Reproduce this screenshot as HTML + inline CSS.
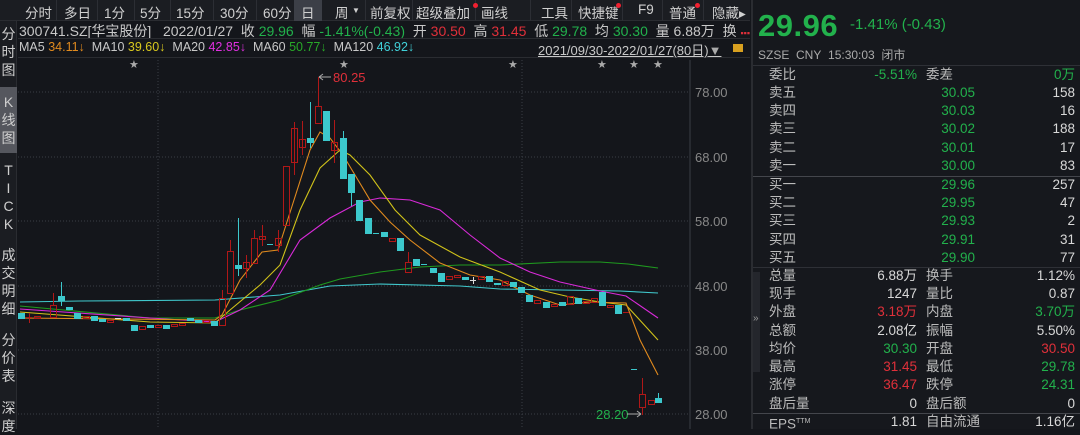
<!DOCTYPE html>
<html><head><meta charset="utf-8">
<style>
*{margin:0;padding:0;box-sizing:border-box}
body{width:1080px;height:429px;background:#14161b;font-family:"Liberation Sans","Noto Sans CJK SC",sans-serif;color:#c8c8c8;position:relative;overflow:hidden;font-size:13px}
.abs{position:absolute;white-space:nowrap}
.tb{position:absolute;top:0;left:0;width:750px;height:21px;background:#1b1d22;border-bottom:1px solid #2a2c31}
.tb span{position:absolute;top:2px;font-size:13.5px;color:#d0d0d0}
.tb i{position:absolute;top:0;width:1px;height:21px;background:#2c2e34}
.g{color:#22b14c}.r{color:#e0303a}
.side{position:absolute;left:0;top:21px;width:17px;height:408px;background:#1b1d22;border-right:1px solid #2a2c31}
.side div{position:absolute;left:0;width:17px;text-align:center;font-size:14px;line-height:18px;color:#cfcfcf}
.rp{position:absolute;left:751px;top:0;width:329px;height:429px;background:#16181d;border-left:2px solid #2a2c31}
.row{position:absolute;left:16px;width:306px;height:18px;font-size:13.5px;line-height:18px}
.row .l1{position:absolute;left:0;color:#bbb}
.row .v1{position:absolute;right:158px;text-align:right}
.row .l2{position:absolute;left:157px;color:#bbb}
.row .v2{position:absolute;right:0;text-align:right}
.w{color:#d8d8d8}
</style></head><body>
<div class="tb">
<i style="left:56px"></i><i style="left:97px"></i><i style="left:134px"></i><i style="left:170px"></i><i style="left:213px"></i><i style="left:256px"></i><i style="left:365px"></i><i style="left:412px"></i><i style="left:475px"></i><i style="left:530px"></i><i style="left:571px"></i><i style="left:622px"></i><i style="left:662px"></i><i style="left:703px"></i>
<span style="left:25px">分时</span><span style="left:64px">多日</span><span style="left:104px">1分</span><span style="left:140px">5分</span><span style="left:176px">15分</span><span style="left:220px">30分</span><span style="left:263px">60分</span>
<div class="abs" style="left:294px;top:0;width:28px;height:21px;background:#3c3f47"></div><span style="left:301px">日</span><span style="left:335px">周</span><span style="left:352px;font-size:8px;top:6px">▼</span>
<span style="left:370px">前复权</span><span style="left:416px">超级叠加</span><span style="left:481px">画线</span><span style="left:541px">工具</span><span style="left:578px">快捷键</span><span style="left:638px">F9</span><span style="left:669px">普通</span><span style="left:712px">隐藏▸</span>
<div class="abs" style="left:473px;top:3px;width:5px;height:5px;border-radius:3px;background:#f02030"></div>
<div class="abs" style="left:616px;top:3px;width:5px;height:5px;border-radius:3px;background:#f02030"></div>
<div class="abs" style="left:695px;top:3px;width:5px;height:5px;border-radius:3px;background:#f02030"></div>
</div>
<div class="abs" style="left:19px;top:21px;font-size:14px">300741.SZ[华宝股份]&nbsp;&nbsp;&nbsp;2022/01/27&nbsp;&nbsp;收 <span class="g">29.96</span>&nbsp;&nbsp;幅 <span class="g">-1.41%(-0.43)</span>&nbsp;&nbsp;开 <span class="r">30.50</span>&nbsp;&nbsp;高 <span class="r">31.45</span>&nbsp;&nbsp;低 <span class="g">29.78</span>&nbsp;&nbsp;均 <span class="g">30.30</span>&nbsp;&nbsp;量 6.88万&nbsp;&nbsp;换 <span class="r" style="font-size:9px">▪▪▪</span></div>
<div class="abs" style="left:18px;top:38px;width:732px;height:20px;border-bottom:1px solid #2a2c31;border-top:1px solid #2a2c31"></div>
<div class="abs" style="left:19px;top:40px;font-size:12.5px">MA5 <span style="color:#e08a1e">34.11↓</span>&nbsp;&nbsp;MA10 <span style="color:#d8c81e">39.60↓</span>&nbsp;&nbsp;MA20 <span style="color:#e030e0">42.85↓</span>&nbsp;&nbsp;MA60 <span style="color:#28a828">50.77↓</span>&nbsp;&nbsp;MA120 <span style="color:#40d0d8">46.92↓</span></div>
<div class="abs" style="left:538px;top:40px;font-size:13px;text-decoration:underline">2021/09/30-2022/01/27(80日)<span style="color:#aaa;text-decoration:none">▼</span></div>
<div class="abs" style="left:733px;top:44px;width:10px;height:8px;background:#d8a020"></div>
<div class="side">
<div style="top:4px">分<br>时<br>图</div>
<div style="top:66px;height:66px;background:#55575e;padding-top:6px">K<br>线<br>图</div>
<div style="top:140px">T<br>I<br>C<br>K</div>
<div style="top:225px">成<br>交<br>明<br>细</div>
<div style="top:310px">分<br>价<br>表</div>
<div style="top:378px">深<br>度</div>
</div>
<svg class="abs" style="left:0;top:0" width="750" height="429">
<g stroke="#3a3d44" stroke-dasharray="1,2" stroke-width="1">
<line x1="18" y1="92" x2="690" y2="92"/><line x1="18" y1="157" x2="690" y2="157"/><line x1="18" y1="221" x2="690" y2="221"/><line x1="18" y1="286" x2="690" y2="286"/><line x1="18" y1="350" x2="690" y2="350"/><line x1="18" y1="414" x2="690" y2="414"/>
<line x1="158" y1="60" x2="158" y2="429"/><line x1="522" y1="60" x2="522" y2="429"/>
</g>
<line x1="690" y1="60" x2="690" y2="429" stroke="#3a3d44"/>
<g fill="#aaa" font-size="11" font-family="Liberation Sans"><text x="129" y="68">★</text><text x="339" y="68">★</text><text x="508" y="68">★</text><text x="597" y="68">★</text><text x="629" y="68">★</text><text x="653" y="68">★</text></g>
<g fill="#888" font-size="13" font-family="Liberation Sans"><text x="695" y="97">78.00</text><text x="695" y="162">68.00</text><text x="695" y="226">58.00</text><text x="695" y="291">48.00</text><text x="695" y="355">38.00</text><text x="695" y="419">28.00</text></g>
<text x="333" y="82" fill="#e0303a" font-size="13" font-family="Liberation Sans">80.25</text>
<path d="M319 77h12M319 77l4-3M319 77l4 3" stroke="#aaa" fill="none"/>
<text x="596" y="419" fill="#22b14c" font-size="13" font-family="Liberation Sans">28.20</text>
<path d="M627 414h14M641 414l-4-3M641 414l-4 3" stroke="#aaa" fill="none"/>
<g fill="none" stroke-width="1.1">
<polyline stroke="#40c8cc" points="20,302 80,301 215,300 280,295 330,286 380,284 460,286 500,289 560,290 620,291 658,293"/>
<polyline stroke="#1f9a1f" points="20,306 150,318 215,318 240,310 280,300 320,285 340,279 380,272 420,267 460,265 500,265 560,262 600,262 628,264 658,268"/>
<polyline stroke="#d82ad8" points="20,309 150,318 215,322 240,310 270,290 300,240 330,218 360,202 380,198 410,200 440,210 470,235 500,258 530,272 560,282 600,291 626,296 658,318"/>
<polyline stroke="#d0c21a" points="20,312 150,322 215,323 230,310 260,285 280,265 300,210 320,168 340,150 350,155 370,175 395,210 420,235 460,257 500,272 540,290 570,297 600,302 626,305 658,340"/>
<polyline stroke="#e08a1e" points="20,318 215,320 222,315 240,280 262,252 278,250 294,200 310,150 320,132 330,138 343,155 355,175 370,200 390,222 410,240 440,263 470,275 500,280 530,295 560,305 590,302 626,303 640,340 658,375"/>
</g>
<g stroke-width="1">
<g stroke="#b01818" fill="none">
<rect x="50.5" y="305.5" width="6" height="12"/><line x1="53.5" y1="293" x2="53.5" y2="305"/>
<line x1="26" y1="317.5" x2="32" y2="317.5"/><line x1="29.5" y1="313" x2="29.5" y2="323"/>
<rect x="34.5" y="316.5" width="6" height="2"/><rect x="83.5" y="316.5" width="6" height="2"/><rect x="107.5" y="320.5" width="6" height="2"/>
<rect x="139.5" y="326.5" width="6" height="3"/><rect x="155.5" y="325.5" width="6" height="2"/><rect x="171.5" y="324.5" width="6" height="2"/><rect x="179.5" y="323.5" width="6" height="2"/><rect x="203.5" y="320.5" width="6" height="2"/>
<rect x="219.5" y="298.5" width="6" height="27"/><line x1="222.5" y1="290" x2="222.5" y2="298"/>
<rect x="227.5" y="251.5" width="6" height="42"/><line x1="230.5" y1="240" x2="230.5" y2="251"/>
<rect x="243.5" y="262.5" width="6" height="6"/><line x1="246.5" y1="255" x2="246.5" y2="278"/>
<rect x="251.5" y="238.5" width="6" height="25"/><line x1="254.5" y1="230" x2="254.5" y2="238"/>
<rect x="259.5" y="236.5" width="6" height="3"/><line x1="262.5" y1="225" x2="262.5" y2="246"/>
<rect x="275.5" y="238.5" width="6" height="7"/><line x1="278.5" y1="230" x2="278.5" y2="252"/>
<rect x="283.5" y="166.5" width="6" height="59"/>
<rect x="291.5" y="128.5" width="6" height="34"/><line x1="294.5" y1="122" x2="294.5" y2="175"/>
<rect x="299.5" y="139.5" width="6" height="8"/><line x1="302.5" y1="121" x2="302.5" y2="155"/>
<rect x="315.5" y="106.5" width="6" height="17"/><line x1="318.5" y1="77" x2="318.5" y2="106"/>
<rect x="331.5" y="142.5" width="6" height="8"/><line x1="334.5" y1="120" x2="334.5" y2="163"/>
<rect x="389.5" y="238.5" width="6" height="3"/>
<rect x="405.5" y="262.5" width="6" height="10"/><line x1="408.5" y1="252" x2="408.5" y2="262"/>
<rect x="446.5" y="276.5" width="6" height="3"/><rect x="454.5" y="275.5" width="6" height="2"/><rect x="478.5" y="276.5" width="6" height="3"/><rect x="502.5" y="281.5" width="6" height="4"/>
<rect x="534.5" y="300.5" width="6" height="3"/><rect x="551.5" y="304.5" width="6" height="2"/><rect x="567.5" y="296.5" width="6" height="8"/><rect x="583.5" y="301.5" width="6" height="2"/><rect x="591.5" y="298.5" width="6" height="4"/><rect x="607.5" y="305.5" width="6" height="2"/>
<line x1="623" y1="312.5" x2="629" y2="312.5"/>
<rect x="639.5" y="394.5" width="6" height="13"/><line x1="642.5" y1="378" x2="642.5" y2="394"/><line x1="642.5" y1="408" x2="642.5" y2="415"/>
<rect x="648.5" y="400.5" width="6" height="4"/>
</g>
<g fill="#3cc8cc" stroke="#3cc8cc">
<rect x="18.5" y="313.5" width="6" height="5"/><rect x="58.5" y="296.5" width="6" height="4"/><line x1="61.5" y1="282" x2="61.5" y2="306"/>
<rect x="66.5" y="307.5" width="6" height="2"/><rect x="74.5" y="313.5" width="6" height="5"/><rect x="91.5" y="316.5" width="6" height="4"/><rect x="99.5" y="319.5" width="6" height="2"/><rect x="123.5" y="318.5" width="6" height="2"/><rect x="131.5" y="325.5" width="6" height="5"/><rect x="147.5" y="325.5" width="6" height="2"/><rect x="163.5" y="325.5" width="6" height="3"/><rect x="187.5" y="318.5" width="6" height="2"/><rect x="195.5" y="320.5" width="6" height="2"/><rect x="211.5" y="321.5" width="6" height="4"/>
<rect x="235.5" y="265.5" width="6" height="3"/><line x1="238.5" y1="218" x2="238.5" y2="276" stroke-width="1"/>
<line x1="267" y1="244.5" x2="273" y2="244.5"/>
<rect x="307.5" y="138.5" width="6" height="4"/><line x1="310.5" y1="102" x2="310.5" y2="148"/>
<rect x="323.5" y="111.5" width="6" height="29"/>
<rect x="340.5" y="138.5" width="6" height="40"/><line x1="343.5" y1="131" x2="343.5" y2="138"/>
<rect x="348.5" y="174.5" width="6" height="18"/><line x1="351.5" y1="192" x2="351.5" y2="206"/>
<rect x="356.5" y="200.5" width="6" height="20"/>
<rect x="365.5" y="218.5" width="6" height="15"/>
<line x1="373" y1="233.5" x2="379" y2="233.5"/><rect x="381.5" y="232.5" width="6" height="4"/>
<rect x="397.5" y="238.5" width="6" height="12"/>
<rect x="413.5" y="259.5" width="6" height="6"/><line x1="421" y1="264.5" x2="427" y2="264.5"/>
<rect x="430.5" y="268.5" width="6" height="4"/><rect x="438.5" y="273.5" width="6" height="8"/>
<rect x="462.5" y="277.5" width="6" height="2"/><rect x="486.5" y="276.5" width="6" height="5"/><rect x="494.5" y="283.5" width="6" height="1"/><rect x="510.5" y="282.5" width="6" height="4"/>
<rect x="518.5" y="287.5" width="6" height="5"/><rect x="526.5" y="295.5" width="6" height="6"/><rect x="543.5" y="302.5" width="6" height="5"/><rect x="559.5" y="302.5" width="6" height="3"/><rect x="575.5" y="298.5" width="6" height="5"/>
<rect x="599.5" y="292.5" width="6" height="13"/><rect x="615.5" y="305.5" width="6" height="8"/>
<line x1="631" y1="369.5" x2="637" y2="369.5"/>
<rect x="655.5" y="398.5" width="6" height="4"/><line x1="658.5" y1="393" x2="658.5" y2="398"/>
</g>
<g stroke="#ddd"><line x1="115" y1="318.5" x2="121" y2="318.5"/><line x1="470" y1="280.5" x2="476" y2="280.5"/><line x1="473.5" y1="277" x2="473.5" y2="284"/></g>
</g>
</svg>
<div class="rp">
<div class="abs g" style="left:5px;top:8px;font-size:31px;font-weight:bold;letter-spacing:0.5px">29.96</div>
<div class="abs g" style="left:97px;top:16px;font-size:15px">-1.41% (-0.43)</div>
<div class="abs" style="left:5px;top:46px;font-size:12px;color:#aaa">SZSE&nbsp; CNY&nbsp; 15:30:03&nbsp; 闭市</div>
<div class="abs" style="left:0;top:65px;width:327px;border-top:1px solid #2e3036"></div>
<div class="row" style="top:66px"><span class="l1">委比</span><span class="v1 g">-5.51%</span><span class="l2">委差</span><span class="v2 g">0万</span></div>
<div class="row" style="top:84px"><span class="l1">卖五</span><span class="v1 g" style="right:100px">30.05</span><span class="v2 w">158</span></div>
<div class="row" style="top:102px"><span class="l1">卖四</span><span class="v1 g" style="right:100px">30.03</span><span class="v2 w">16</span></div>
<div class="row" style="top:120px"><span class="l1">卖三</span><span class="v1 g" style="right:100px">30.02</span><span class="v2 w">188</span></div>
<div class="row" style="top:139px"><span class="l1">卖二</span><span class="v1 g" style="right:100px">30.01</span><span class="v2 w">17</span></div>
<div class="row" style="top:157px"><span class="l1">卖一</span><span class="v1 g" style="right:100px">30.00</span><span class="v2 w">83</span></div>
<div class="abs" style="left:0;top:176px;width:327px;border-top:1px solid #44464c"></div>
<div class="row" style="top:176px"><span class="l1">买一</span><span class="v1 g" style="right:100px">29.96</span><span class="v2 w">257</span></div>
<div class="row" style="top:194px"><span class="l1">买二</span><span class="v1 g" style="right:100px">29.95</span><span class="v2 w">47</span></div>
<div class="row" style="top:212px"><span class="l1">买三</span><span class="v1 g" style="right:100px">29.93</span><span class="v2 w">2</span></div>
<div class="row" style="top:231px"><span class="l1">买四</span><span class="v1 g" style="right:100px">29.91</span><span class="v2 w">31</span></div>
<div class="row" style="top:249px"><span class="l1">买五</span><span class="v1 g" style="right:100px">29.90</span><span class="v2 w">77</span></div>
<div class="abs" style="left:0;top:267px;width:327px;border-top:1px solid #2e3036"></div>
<div class="row" style="top:267px"><span class="l1">总量</span><span class="v1 w">6.88万</span><span class="l2">换手</span><span class="v2 w">1.12%</span></div>
<div class="row" style="top:285px"><span class="l1">现手</span><span class="v1 w">1247</span><span class="l2">量比</span><span class="v2 w">0.87</span></div>
<div class="row" style="top:303px"><span class="l1">外盘</span><span class="v1 r">3.18万</span><span class="l2">内盘</span><span class="v2 g">3.70万</span></div>
<div class="row" style="top:322px"><span class="l1">总额</span><span class="v1 w">2.08亿</span><span class="l2">振幅</span><span class="v2 w">5.50%</span></div>
<div class="row" style="top:340px"><span class="l1">均价</span><span class="v1 g">30.30</span><span class="l2">开盘</span><span class="v2 r">30.50</span></div>
<div class="row" style="top:358px"><span class="l1">最高</span><span class="v1 r">31.45</span><span class="l2">最低</span><span class="v2 g">29.78</span></div>
<div class="row" style="top:376px"><span class="l1">涨停</span><span class="v1 r">36.47</span><span class="l2">跌停</span><span class="v2 g">24.31</span></div>
<div class="row" style="top:395px"><span class="l1">盘后量</span><span class="v1 w">0</span><span class="l2">盘后额</span><span class="v2 w">0</span></div>
<div class="abs" style="left:0;top:413px;width:327px;border-top:1px solid #44464c"></div>
<div class="row" style="top:413px"><span class="l1">EPS<sup style="font-size:7px">TTM</sup></span><span class="v1 w">1.81</span><span class="l2">自由流通</span><span class="v2 w">1.16亿</span></div>
<div class="abs" style="left:0;top:272px;width:7px;height:100px;background:#24262c"></div>
<div class="abs" style="left:0;top:313px;font-size:10px;color:#999">»</div>
</div>
</body></html>
